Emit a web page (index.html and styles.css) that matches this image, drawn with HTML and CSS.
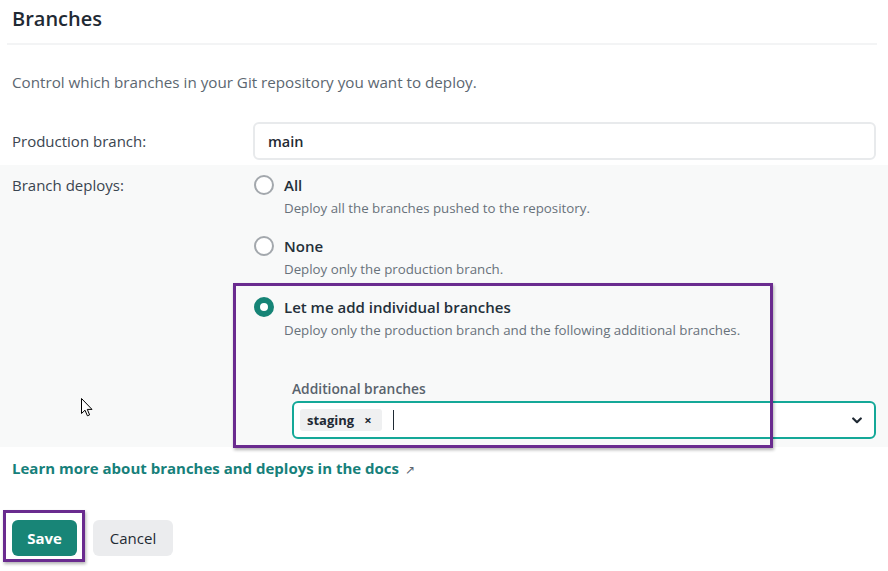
FILE: index.html
```html
<!DOCTYPE html>
<html lang="en">
<head>
<meta charset="utf-8">
<title>Branches</title>
<link rel="stylesheet" href="styles.css">
</head>
<body>
<div class="page">
  <header class="head">
    <h1 class="title">Branches</h1>
  </header>
  <p class="intro">Control which branches in your Git repository you want to deploy.</p>

  <div class="row row-prod">
    <div class="lbl">Production branch:</div>
    <div class="input">main</div>
  </div>

  <div class="row row-deploys">
    <div class="lbl">Branch deploys:</div>
    <div class="options">
      <div class="opt">
        <span class="radio"></span>
        <div class="opt-text">
          <div class="opt-title">All</div>
          <div class="opt-desc">Deploy all the branches pushed to the repository.</div>
        </div>
      </div>
      <div class="opt">
        <span class="radio"></span>
        <div class="opt-text">
          <div class="opt-title">None</div>
          <div class="opt-desc">Deploy only the production branch.</div>
        </div>
      </div>
      <div class="opt">
        <span class="radio radio-on"></span>
        <div class="opt-text">
          <div class="opt-title">Let me add individual branches</div>
          <div class="opt-desc">Deploy only the production branch and the following additional branches.</div>
        </div>
      </div>
      <div class="additional">
        <div class="add-label">Additional branches</div>
        <div class="select">
          <span class="chip">staging <span class="chip-x">×</span></span>
          <span class="caret"></span>
          <svg class="chev" width="10" height="7" viewBox="0 0 10 7"><path d="M1.2 1.5 L5 5.2 L8.8 1.5" fill="none" stroke="#1f2933" stroke-width="2.2" stroke-linecap="round" stroke-linejoin="round"/></svg>
        </div>
      </div>
      <div class="highlight hl-options"></div>
    </div>
  </div>

  <a class="docs" href="#">Learn more about branches and deploys in the docs <span class="ext">↗</span></a>

  <div class="actions">
    <div class="save-wrap">
      <button class="btn btn-save">Save</button>
      <div class="highlight hl-save"></div>
    </div>
    <button class="btn btn-cancel">Cancel</button>
  </div>

  <svg class="pointer" width="12" height="19" viewBox="0 0 12 19"><path d="M0.5 0.5 L0.5 15.5 L4 12.2 L6.4 17.8 L8.6 16.9 L6.3 11.4 L11 11.4 Z" fill="#fff" stroke="#000" stroke-width="1" stroke-linejoin="miter"/></svg>
</div>
</body>
</html>
```

FILE: styles.css
```css
* { box-sizing: border-box; }
html, body { margin: 0; padding: 0; background: #fff; }
body {
  font-family: "Open Sans", "Noto Sans", sans-serif;
  color: #2b3640;
  width: 888px;
  height: 571px;
  overflow: hidden;
}
.page { position: relative; }

.head { padding: 5px 11px 0 12px; }
.title {
  margin: 0;
  font-size: 20px;
  line-height: 28px;
  font-weight: 600;
  color: #1f2a34;
  border-bottom: 2px solid #f3f4f5;
  padding-bottom: 10px;
  margin-left: -5px;
  padding-left: 5px;
}
.intro {
  margin: 27px 12px 25px;
  font-size: 15.2px;
  line-height: 20px;
  color: #5c6771;
}

.row {
  display: grid;
  grid-template-columns: 241px 1fr;
  padding: 0 12px;
}
.lbl {
  font-size: 15px;
  line-height: 20px;
  color: #3a4550;
}
.row-prod {
  align-items: center;
  padding-top: 5px;
  padding-bottom: 5px;
}
.input {
  height: 38px;
  border: 2px solid #e8eaec;
  border-radius: 6px;
  background: #fff;
  padding: 0 13px;
  display: flex;
  align-items: center;
  font-weight: 600;
  font-size: 14.5px;
  color: #1f2a34;
}

.row-deploys {
  background: #f8f9f9;
  padding-top: 10px;
  padding-bottom: 8px;
}
.options {
  position: relative;
  display: flex;
  flex-direction: column;
  gap: 19px;
}
.opt {
  display: flex;
  gap: 10px;
  padding-left: 1px;
}
.radio {
  flex: none;
  width: 20px;
  height: 20px;
  border-radius: 50%;
  border: 2px solid #a3a8ad;
  background: #fff;
}
.radio-on {
  border: 6px solid #168476;
  background: #fff;
}
.opt-title {
  font-size: 15px;
  line-height: 20px;
  font-weight: 600;
  color: #24303a;
}
.opt-desc {
  margin-top: 4px;
  font-size: 13.3px;
  line-height: 18px;
  color: #68727b;
}
.additional {
  padding-left: 39px;
  margin-top: 20px;
}
.add-label {
  font-size: 13.8px;
  line-height: 20px;
  font-weight: 600;
  color: #58636d;
  margin-top: 1px;
  margin-bottom: 2px;
}
.select {
  height: 38px;
  border: 2px solid #14a898;
  border-radius: 6px;
  background: #fff;
  display: flex;
  align-items: center;
  padding: 0 12px 0 6px;
}
.chip {
  display: inline-flex;
  align-items: center;
  gap: 10px;
  height: 22px;
  padding: 0 10px 0 7px;
  background: #eff0f1;
  border-radius: 3px;
  font-size: 13px;
  font-weight: 700;
  color: #1f2a34;
}
.chip-x { font-size: 13px; font-weight: 700; }
.caret {
  width: 1px;
  height: 20px;
  background: #1f2a34;
  margin-left: 11px;
}
.chev { margin-left: auto; }

.highlight {
  position: absolute;
  border: 3px solid #6a2b8f;
  box-shadow: 1px 2px 3px rgba(0, 0, 0, 0.3);
  pointer-events: none;
}
.hl-options {
  left: -20px;
  top: 108px;
  width: 540px;
  height: 165px;
}

.docs {
  display: inline-block;
  margin: 11px 12px 0;
  font-size: 15px;
  line-height: 20px;
  font-weight: 700;
  color: #16807a;
  text-decoration: none;
}
.ext {
  font-weight: 400;
  font-size: 12px;
  color: #5c6771;
  margin-left: 2px;
}

.actions {
  display: flex;
  gap: 16px;
  margin: 40px 12px 0;
}
.save-wrap { position: relative; }
.btn {
  height: 36px;
  border: none;
  border-radius: 6px;
  font-family: inherit;
  font-size: 15px;
  padding: 0;
  cursor: pointer;
}
.btn-save {
  width: 65px;
  background: #188577;
  color: #fff;
  font-weight: 700;
}
.btn-cancel {
  width: 80px;
  background: #ebecee;
  color: #1f2a34;
  font-weight: 400;
}
.hl-save {
  left: -9px;
  top: -10px;
  width: 82px;
  height: 52px;
}

.pointer {
  position: absolute;
  left: 81px;
  top: 398px;
}
```
